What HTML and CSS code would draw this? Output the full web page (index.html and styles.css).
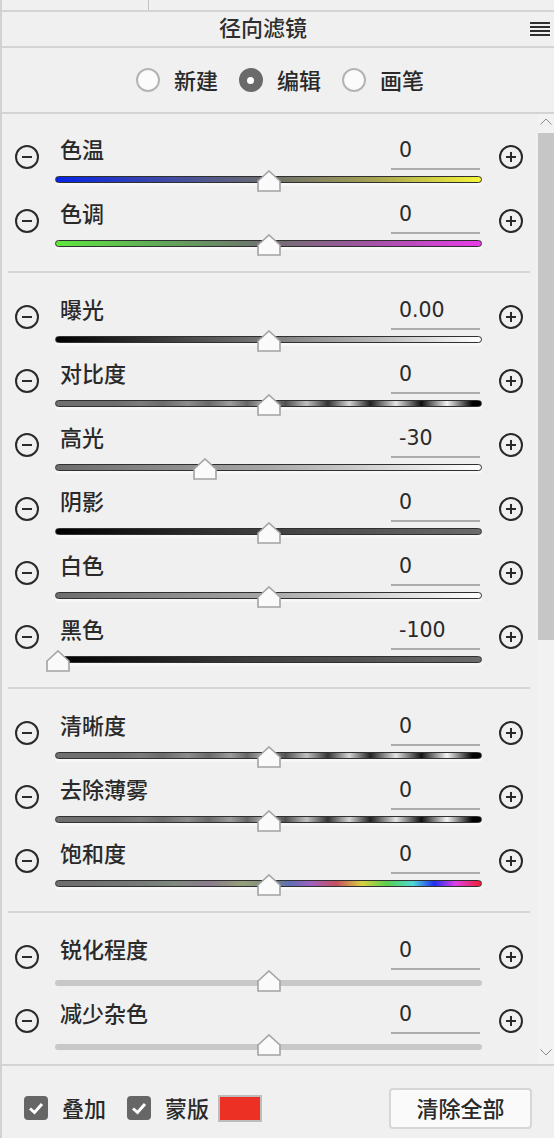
FILE: index.html
```html
<!DOCTYPE html>
<html lang="zh-CN">
<head>
<meta charset="UTF-8" />
<meta name="viewport" content="width=device-width, initial-scale=1" />
<title>径向滤镜</title>
<link rel="stylesheet" href="styles.css">
</head>
<body>
  <div class="panel">
    <div class="topstrip"><span class="tick"></span></div>

    <div class="header">
      <h2 class="title">径向滤镜</h2>
      <svg class="menu" width="20" height="14" viewBox="0 0 20 14">
        <rect x="0" y="0" width="20" height="2" fill="#2e2e2e"/>
        <rect x="0" y="4" width="20" height="2" fill="#2e2e2e"/>
        <rect x="0" y="8" width="20" height="2" fill="#2e2e2e"/>
        <rect x="0" y="12" width="20" height="2" fill="#2e2e2e"/>
      </svg>
    </div>

    <div class="modes">
      <label class="opt"><span class="radio"></span>新建</label>
      <label class="opt"><span class="radio checked"></span>编辑</label>
      <label class="opt"><span class="radio"></span>画笔</label>
    </div>

    <div class="scroller">
      <div class="content">

        <div class="row">
          <div class="step"><svg class="pm" viewBox="0 0 24 24"><circle cx="12" cy="12" r="11"/><line x1="7" y1="12" x2="17" y2="12"/></svg></div>
          <div class="mid">
            <div class="head"><span class="label">色温</span><span class="value">0</span></div>
            <div class="slider"><div class="track t-temp"></div><div class="thumbs"><svg class="thumb" style="left:50%" viewBox="0 0 24 22"><polygon points="1,11 12,1 23,11 23,21 1,21"/></svg></div></div>
          </div>
          <div class="step plus"><svg class="pm" viewBox="0 0 24 24"><circle cx="12" cy="12" r="11"/><line x1="7" y1="12" x2="17" y2="12"/><line x1="12" y1="7" x2="12" y2="17"/></svg></div>
        </div>

        <div class="row">
          <div class="step"><svg class="pm" viewBox="0 0 24 24"><circle cx="12" cy="12" r="11"/><line x1="7" y1="12" x2="17" y2="12"/></svg></div>
          <div class="mid">
            <div class="head"><span class="label">色调</span><span class="value">0</span></div>
            <div class="slider"><div class="track t-tint"></div><div class="thumbs"><svg class="thumb" style="left:50%" viewBox="0 0 24 22"><polygon points="1,11 12,1 23,11 23,21 1,21"/></svg></div></div>
          </div>
          <div class="step plus"><svg class="pm" viewBox="0 0 24 24"><circle cx="12" cy="12" r="11"/><line x1="7" y1="12" x2="17" y2="12"/><line x1="12" y1="7" x2="12" y2="17"/></svg></div>
        </div>

        <div class="sep"></div>

        <div class="row">
          <div class="step"><svg class="pm" viewBox="0 0 24 24"><circle cx="12" cy="12" r="11"/><line x1="7" y1="12" x2="17" y2="12"/></svg></div>
          <div class="mid">
            <div class="head"><span class="label">曝光</span><span class="value">0.00</span></div>
            <div class="slider"><div class="track t-exposure"></div><div class="thumbs"><svg class="thumb" style="left:50%" viewBox="0 0 24 22"><polygon points="1,11 12,1 23,11 23,21 1,21"/></svg></div></div>
          </div>
          <div class="step plus"><svg class="pm" viewBox="0 0 24 24"><circle cx="12" cy="12" r="11"/><line x1="7" y1="12" x2="17" y2="12"/><line x1="12" y1="7" x2="12" y2="17"/></svg></div>
        </div>

        <div class="row">
          <div class="step"><svg class="pm" viewBox="0 0 24 24"><circle cx="12" cy="12" r="11"/><line x1="7" y1="12" x2="17" y2="12"/></svg></div>
          <div class="mid">
            <div class="head"><span class="label">对比度</span><span class="value">0</span></div>
            <div class="slider"><div class="track t-bands"></div><div class="thumbs"><svg class="thumb" style="left:50%" viewBox="0 0 24 22"><polygon points="1,11 12,1 23,11 23,21 1,21"/></svg></div></div>
          </div>
          <div class="step plus"><svg class="pm" viewBox="0 0 24 24"><circle cx="12" cy="12" r="11"/><line x1="7" y1="12" x2="17" y2="12"/><line x1="12" y1="7" x2="12" y2="17"/></svg></div>
        </div>

        <div class="row">
          <div class="step"><svg class="pm" viewBox="0 0 24 24"><circle cx="12" cy="12" r="11"/><line x1="7" y1="12" x2="17" y2="12"/></svg></div>
          <div class="mid">
            <div class="head"><span class="label">高光</span><span class="value">-30</span></div>
            <div class="slider"><div class="track t-gray-white"></div><div class="thumbs"><svg class="thumb" style="left:35%" viewBox="0 0 24 22"><polygon points="1,11 12,1 23,11 23,21 1,21"/></svg></div></div>
          </div>
          <div class="step plus"><svg class="pm" viewBox="0 0 24 24"><circle cx="12" cy="12" r="11"/><line x1="7" y1="12" x2="17" y2="12"/><line x1="12" y1="7" x2="12" y2="17"/></svg></div>
        </div>

        <div class="row">
          <div class="step"><svg class="pm" viewBox="0 0 24 24"><circle cx="12" cy="12" r="11"/><line x1="7" y1="12" x2="17" y2="12"/></svg></div>
          <div class="mid">
            <div class="head"><span class="label">阴影</span><span class="value">0</span></div>
            <div class="slider"><div class="track t-black-gray"></div><div class="thumbs"><svg class="thumb" style="left:50%" viewBox="0 0 24 22"><polygon points="1,11 12,1 23,11 23,21 1,21"/></svg></div></div>
          </div>
          <div class="step plus"><svg class="pm" viewBox="0 0 24 24"><circle cx="12" cy="12" r="11"/><line x1="7" y1="12" x2="17" y2="12"/><line x1="12" y1="7" x2="12" y2="17"/></svg></div>
        </div>

        <div class="row">
          <div class="step"><svg class="pm" viewBox="0 0 24 24"><circle cx="12" cy="12" r="11"/><line x1="7" y1="12" x2="17" y2="12"/></svg></div>
          <div class="mid">
            <div class="head"><span class="label">白色</span><span class="value">0</span></div>
            <div class="slider"><div class="track t-gray-white"></div><div class="thumbs"><svg class="thumb" style="left:50%" viewBox="0 0 24 22"><polygon points="1,11 12,1 23,11 23,21 1,21"/></svg></div></div>
          </div>
          <div class="step plus"><svg class="pm" viewBox="0 0 24 24"><circle cx="12" cy="12" r="11"/><line x1="7" y1="12" x2="17" y2="12"/><line x1="12" y1="7" x2="12" y2="17"/></svg></div>
        </div>

        <div class="row">
          <div class="step"><svg class="pm" viewBox="0 0 24 24"><circle cx="12" cy="12" r="11"/><line x1="7" y1="12" x2="17" y2="12"/></svg></div>
          <div class="mid">
            <div class="head"><span class="label">黑色</span><span class="value">-100</span></div>
            <div class="slider"><div class="track t-black-gray"></div><div class="thumbs"><svg class="thumb" style="left:0%" viewBox="0 0 24 22"><polygon points="1,11 12,1 23,11 23,21 1,21"/></svg></div></div>
          </div>
          <div class="step plus"><svg class="pm" viewBox="0 0 24 24"><circle cx="12" cy="12" r="11"/><line x1="7" y1="12" x2="17" y2="12"/><line x1="12" y1="7" x2="12" y2="17"/></svg></div>
        </div>

        <div class="sep"></div>

        <div class="row">
          <div class="step"><svg class="pm" viewBox="0 0 24 24"><circle cx="12" cy="12" r="11"/><line x1="7" y1="12" x2="17" y2="12"/></svg></div>
          <div class="mid">
            <div class="head"><span class="label">清晰度</span><span class="value">0</span></div>
            <div class="slider"><div class="track t-bands"></div><div class="thumbs"><svg class="thumb" style="left:50%" viewBox="0 0 24 22"><polygon points="1,11 12,1 23,11 23,21 1,21"/></svg></div></div>
          </div>
          <div class="step plus"><svg class="pm" viewBox="0 0 24 24"><circle cx="12" cy="12" r="11"/><line x1="7" y1="12" x2="17" y2="12"/><line x1="12" y1="7" x2="12" y2="17"/></svg></div>
        </div>

        <div class="row">
          <div class="step"><svg class="pm" viewBox="0 0 24 24"><circle cx="12" cy="12" r="11"/><line x1="7" y1="12" x2="17" y2="12"/></svg></div>
          <div class="mid">
            <div class="head"><span class="label">去除薄雾</span><span class="value">0</span></div>
            <div class="slider"><div class="track t-bands"></div><div class="thumbs"><svg class="thumb" style="left:50%" viewBox="0 0 24 22"><polygon points="1,11 12,1 23,11 23,21 1,21"/></svg></div></div>
          </div>
          <div class="step plus"><svg class="pm" viewBox="0 0 24 24"><circle cx="12" cy="12" r="11"/><line x1="7" y1="12" x2="17" y2="12"/><line x1="12" y1="7" x2="12" y2="17"/></svg></div>
        </div>

        <div class="row">
          <div class="step"><svg class="pm" viewBox="0 0 24 24"><circle cx="12" cy="12" r="11"/><line x1="7" y1="12" x2="17" y2="12"/></svg></div>
          <div class="mid">
            <div class="head"><span class="label">饱和度</span><span class="value">0</span></div>
            <div class="slider"><div class="track t-saturation"></div><div class="thumbs"><svg class="thumb" style="left:50%" viewBox="0 0 24 22"><polygon points="1,11 12,1 23,11 23,21 1,21"/></svg></div></div>
          </div>
          <div class="step plus"><svg class="pm" viewBox="0 0 24 24"><circle cx="12" cy="12" r="11"/><line x1="7" y1="12" x2="17" y2="12"/><line x1="12" y1="7" x2="12" y2="17"/></svg></div>
        </div>

        <div class="sep"></div>

        <div class="row">
          <div class="step"><svg class="pm" viewBox="0 0 24 24"><circle cx="12" cy="12" r="11"/><line x1="7" y1="12" x2="17" y2="12"/></svg></div>
          <div class="mid">
            <div class="head"><span class="label">锐化程度</span><span class="value">0</span></div>
            <div class="slider"><div class="track t-plain"></div><div class="thumbs"><svg class="thumb" style="left:50%" viewBox="0 0 24 22"><polygon points="1,11 12,1 23,11 23,21 1,21"/></svg></div></div>
          </div>
          <div class="step plus"><svg class="pm" viewBox="0 0 24 24"><circle cx="12" cy="12" r="11"/><line x1="7" y1="12" x2="17" y2="12"/><line x1="12" y1="7" x2="12" y2="17"/></svg></div>
        </div>

        <div class="row">
          <div class="step"><svg class="pm" viewBox="0 0 24 24"><circle cx="12" cy="12" r="11"/><line x1="7" y1="12" x2="17" y2="12"/></svg></div>
          <div class="mid">
            <div class="head"><span class="label">减少杂色</span><span class="value">0</span></div>
            <div class="slider"><div class="track t-plain"></div><div class="thumbs"><svg class="thumb" style="left:50%" viewBox="0 0 24 22"><polygon points="1,11 12,1 23,11 23,21 1,21"/></svg></div></div>
          </div>
          <div class="step plus"><svg class="pm" viewBox="0 0 24 24"><circle cx="12" cy="12" r="11"/><line x1="7" y1="12" x2="17" y2="12"/><line x1="12" y1="7" x2="12" y2="17"/></svg></div>
        </div>

      </div>

      <div class="scrollbar">
        <svg class="arrow up" width="12" height="7" viewBox="0 0 12 7"><polyline points="0.5,6.5 6,1 11.5,6.5"/></svg>
        <div class="bar"></div>
        <div class="spacer"></div>
        <svg class="arrow down" width="12" height="7" viewBox="0 0 12 7"><polyline points="0.5,0.5 6,6 11.5,0.5"/></svg>
      </div>
    </div>

    <div class="footer">
      <span class="check"><svg viewBox="0 0 24 24" width="24" height="24"><polyline points="6,12.5 10.5,16.5 18,8"/></svg></span>
      <span class="check-label">叠加</span>
      <span class="check second"><svg viewBox="0 0 24 24" width="24" height="24"><polyline points="6,12.5 10.5,16.5 18,8"/></svg></span>
      <span class="check-label">蒙版</span>
      <span class="swatch"></span>
      <button class="clear">清除全部</button>
    </div>
  </div>
</body>
</html>
```

FILE: styles.css
```css
/* Base */
* {
  box-sizing: border-box;
}
body {
  margin: 0;
  background: #f0f0f0;
  font-family: "Noto Sans CJK SC", "Noto Sans", sans-serif;
  font-weight: 500;
  color: #2a2a2a;
}
.panel {
  width: 554px;
  height: 1138px;
  border-left: 2px solid #d2d2d2;
  display: flex;
  flex-direction: column;
  overflow: hidden;
}

/* Top strip and header */
.topstrip {
  height: 12px;
  border-bottom: 2px solid #d4d4d4;
  display: flex;
}
.tick {
  width: 1px;
  height: 10px;
  margin-left: 146px;
  background: #c4c4c4;
}
.header {
  height: 36px;
  border-bottom: 2px solid #d4d4d4;
  display: flex;
  align-items: center;
}
.title {
  flex: 1;
  margin: 0;
  padding-bottom: 6px;
  text-align: center;
  font-size: 22px;
  font-weight: 500;
  line-height: 28px;
  color: #2e2e2e;
}
.menu {
  margin: 0 4px 0 6px;
}

/* Mode radios */
.modes {
  height: 66px;
  border-bottom: 2px solid #d4d4d4;
  display: flex;
  align-items: center;
  justify-content: center;
  padding-left: 4px;
  font-size: 22px;
}
.opt {
  display: flex;
  align-items: center;
  margin-right: 21px;
  line-height: 28px;
  padding-bottom: 2px;
}
.opt:last-child {
  margin-right: 0;
}
.radio {
  width: 24px;
  height: 24px;
  border-radius: 50%;
  border: 2px solid #b4b4b4;
  background: #fbfbfb;
  margin: 2px 14px 0 0;
  display: flex;
  align-items: center;
  justify-content: center;
}
.radio.checked {
  border-color: #6a6a6a;
  background: #6a6a6a;
}
.radio.checked::after {
  content: "";
  width: 7px;
  height: 7px;
  border-radius: 50%;
  background: #fff;
}

/* Scroll area */
.scroller {
  height: 952px;
  border-bottom: 2px solid #d4d4d4;
  display: flex;
}
.content {
  flex: 1;
  padding-top: 14px;
  overflow: hidden;
}
.row {
  height: 64px;
  display: grid;
  grid-template-columns: 53px 427px 1fr;
}
.step {
  padding: 17px 0 0 13px;
}
.step.plus {
  padding-left: 17px;
}
.pm {
  width: 24px;
  height: 24px;
  display: block;
  fill: none;
  stroke: #2a2a2a;
  stroke-width: 2;
}
.mid {
  display: flex;
  flex-direction: column;
}
.head {
  height: 42px;
  display: flex;
}
.label {
  font-size: 22px;
  line-height: 40px;
  padding-left: 5px;
}
.value {
  margin-left: auto;
  margin-right: 2px;
  width: 89px;
  height: 42px;
  border-bottom: 2px solid #ababab;
  padding: 5px 0 0 8px;
  font-family: "DejaVu Sans", "Liberation Sans", sans-serif;
  font-weight: normal;
  font-size: 20.5px;
  line-height: 35px;
}
.slider {
  position: relative;
  height: 22px;
}
.track {
  margin-top: 6px;
  height: 7px;
  border: 1px solid #303030;
  border-radius: 4px;
  box-shadow: 0 3px 0 #f8f8f8;
}
.thumbs {
  position: absolute;
  top: 0;
  left: 3px;
  right: 3px;
  height: 22px;
}
.thumb {
  position: absolute;
  top: 0;
  width: 24px;
  height: 22px;
  transform: translateX(-50%);
  fill: #fafafa;
  stroke: #a3a3a3;
  stroke-width: 1.6;
}

/* Track colours */
.t-temp {
  background: linear-gradient(to right, #0624e6, #3d49a8 25%, #6c6c6c 50%, #a5a352 75%, #f6f53a);
}
.t-tint {
  background: linear-gradient(to right, #5ee83e, #62a85a 25%, #707070 50%, #a553a8 75%, #e83de8);
}
.t-exposure {
  background: linear-gradient(to right, #000, #3a3a3a 25%, #7a7a7a 50%, #b8b8b8 75%, #fff);
}
.t-gray-white {
  background: linear-gradient(to right, #6c6c6c, #a8a8a8 50%, #fff);
}
.t-black-gray {
  background: linear-gradient(to right, #000, #3c3c3c 45%, #6c6c6c);
}
.t-bands {
  background: linear-gradient(to right,
    #707070 0%, #6e6e6e 14%, #7c7c7c 20%, #6c6c6c 25%, #8c8c8c 31%, #6a6a6a 36%,
    #9c9c9c 41%, #666 45%, #b0b0b0 49%, #505050 54%, #c0c0c0 59%, #333 64%,
    #d4d4d4 69%, #222 74%, #e4e4e4 80%, #111 86%, #f4f4f4 92%, #000 98%);
}
.t-saturation {
  background: linear-gradient(to right,
    #6e6e6e 0%, #767a78 20%, #7f8a80 28%, #8c7c8c 36%, #96a07a 44%, #7c8a7c 50%,
    #6070b4 55%, #a060c0 60%, #c85060 66%, #d8d040 72%, #58d050 78%,
    #50d8d8 84%, #2030f0 89%, #e040e8 94%, #f02030 100%);
}
.t-plain {
  margin-top: 10px;
  height: 6px;
  border: none;
  border-radius: 3px;
  background: #c8c8c8;
  box-shadow: none;
}

.sep {
  height: 2px;
  margin: 15px 8px 15px 6px;
  background: #d4d4d4;
}

/* Scrollbar */
.scrollbar {
  width: 16px;
  display: flex;
  flex-direction: column;
  align-items: center;
  background: #f2f2f2;
}
.arrow {
  fill: none;
  stroke: #8c8c8c;
  stroke-width: 1;
}
.arrow.up {
  margin: 4px 0 8px;
}
.arrow.down {
  margin-bottom: 8px;
}
.bar {
  width: 16px;
  height: 507px;
  background: #c6c6c6;
}
.spacer {
  flex: 1;
}

/* Footer */
.footer {
  height: 72px;
  padding: 12px 22px 0 22px;
  display: flex;
  align-items: center;
  font-size: 22px;
}
.check {
  width: 24px;
  height: 24px;
  border-radius: 4px;
  background: #666;
  display: flex;
}
.check svg {
  fill: none;
  stroke: #fff;
  stroke-width: 3;
}
.check.second {
  margin-left: 21px;
}
.check-label {
  margin-left: 14px;
  line-height: 28px;
  padding-bottom: 2px;
}
.swatch {
  width: 44px;
  height: 27px;
  margin-left: 9px;
  border: 2px solid #bdbdbd;
  background: #ec3024;
}
.clear {
  margin-left: auto;
  width: 143px;
  height: 41px;
  border: 2px solid #d6d6d6;
  border-radius: 4px;
  background: #fafafa;
  font-family: "Noto Sans CJK SC", sans-serif;
  font-weight: 500;
  font-size: 22px;
  line-height: 34px;
  padding: 0 0 2px;
  color: #2a2a2a;
}
```
